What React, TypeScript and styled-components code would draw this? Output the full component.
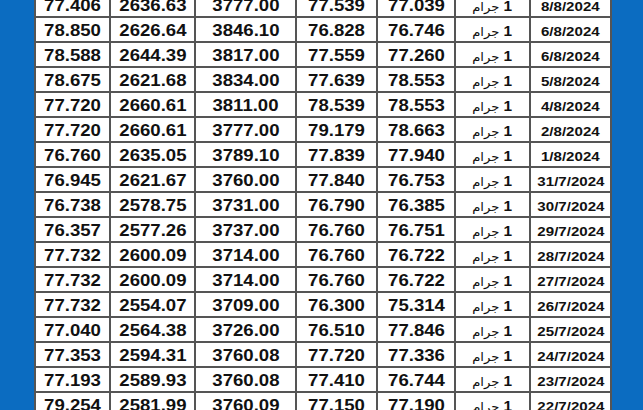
import React from 'react'
import styled, { createGlobalStyle } from 'styled-components'

const GlobalStyle = createGlobalStyle`
  html, body {
    margin: 0;
    padding: 0;
    background: #0b6cc1;
  }
  body {
    font-family: 'Liberation Sans', Arial, 'DejaVu Sans', sans-serif;
  }
`

type Row = [string, string, string, string, string, string]

const rows: Row[] = [
  ['77.406', '2636.63', '3777.00', '77.539', '77.039', '8/8/2024'],
  ['78.850', '2626.64', '3846.10', '76.828', '76.746', '6/8/2024'],
  ['78.588', '2644.39', '3817.00', '77.559', '77.260', '6/8/2024'],
  ['78.675', '2621.68', '3834.00', '77.639', '78.553', '5/8/2024'],
  ['77.720', '2660.61', '3811.00', '78.539', '78.553', '4/8/2024'],
  ['77.720', '2660.61', '3777.00', '79.179', '78.663', '2/8/2024'],
  ['76.760', '2635.05', '3789.10', '77.839', '77.940', '1/8/2024'],
  ['76.945', '2621.67', '3760.00', '77.840', '76.753', '31/7/2024'],
  ['76.738', '2578.75', '3731.00', '76.790', '76.385', '30/7/2024'],
  ['76.357', '2577.26', '3737.00', '76.760', '76.751', '29/7/2024'],
  ['77.732', '2600.09', '3714.00', '76.760', '76.722', '28/7/2024'],
  ['77.732', '2600.09', '3714.00', '76.760', '76.722', '27/7/2024'],
  ['77.732', '2554.07', '3709.00', '76.300', '75.314', '26/7/2024'],
  ['77.040', '2564.38', '3726.00', '76.510', '77.846', '25/7/2024'],
  ['77.353', '2594.31', '3760.08', '77.720', '77.336', '24/7/2024'],
  ['77.193', '2589.93', '3760.08', '77.410', '76.744', '23/7/2024'],
  ['79.254', '2581.99', '3760.09', '77.150', '77.190', '22/7/2024'],
]

const colWidths = [75, 85, 101, 81, 78, 75, 81]

const Frame = styled.div`
  display: flex;
  height: 410px;
  overflow: hidden;
  background: #0b6cc1;
`

const Band = styled.div<{ $w?: number }>`
  flex: ${(p) => (p.$w ? `0 0 ${p.$w}px` : '1')};
  background: #0b6cc1;
`

const Sheet = styled.div`
  flex: 0 0 578px;
  background: #fff;
  overflow: hidden;
`

const Table = styled.table`
  width: 578px;
  border-collapse: collapse;
  table-layout: fixed;
  margin-top: -9px;
  background: #fff;
`

const Tr = styled.tr`
  height: 25px;
`

const Cell = styled.td`
  border: 2px solid #555;
  padding: 3px 0 0;
  text-align: center;
  vertical-align: middle;
  color: #111;
  line-height: 18px;
  white-space: nowrap;
`

// the sheet's figures are a wide bold face, so stretch Arial Bold a little
const Wide = styled.span<{ $size: number }>`
  display: inline-block;
  font-weight: bold;
  font-size: ${(p) => p.$size}px;
  transform: scaleX(1.16);
`

const Unit = styled.span`
  display: inline-block;
  transform: scaleX(1.1);
  font-size: 13px;
`

const One = styled.b`
  font-family: 'Liberation Sans', Arial, sans-serif;
  font-size: 14px;
`

const Word = styled.span`
  font-family: 'DejaVu Sans', sans-serif;
  font-size: 12px;
`

export default function App() {
  return (
    <>
      <GlobalStyle />
      <Frame>
        <Band $w={34} />
        <Sheet>
          <Table>
            <colgroup>
              {colWidths.map((w, i) => (
                <col key={i} style={{ width: w }} />
              ))}
            </colgroup>
            <tbody>
              {rows.map((r, i) => (
                <Tr key={i}>
                  {r.slice(0, 5).map((v, j) => (
                    <Cell key={j}>
                      <Wide $size={16}>{v}</Wide>
                    </Cell>
                  ))}
                  <Cell>
                    <Unit dir='rtl'>
                      <One>1</One> <Word>جرام</Word>
                    </Unit>
                  </Cell>
                  <Cell>
                    <Wide $size={13}>{r[5]}</Wide>
                  </Cell>
                </Tr>
              ))}
            </tbody>
          </Table>
        </Sheet>
        <Band />
      </Frame>
    </>
  )
}
